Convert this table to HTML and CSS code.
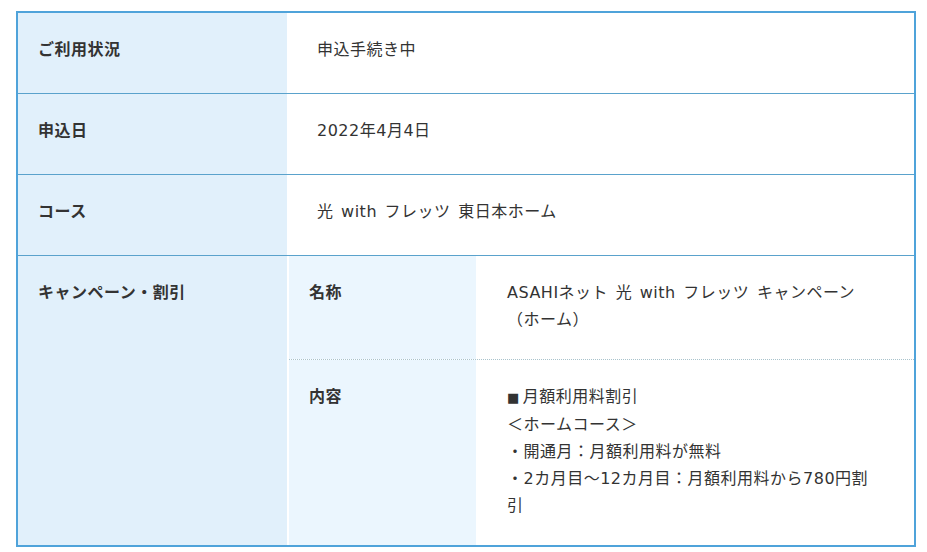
FILE: index.html
```html
<!DOCTYPE html>
<html lang="ja">
<head>
<meta charset="utf-8">
<title>ご利用状況</title>
<link rel="stylesheet" href="styles.css">
</head>
<body>
<div class="page">
  <div class="card">
    <div class="row">
      <div class="th">ご利用状況</div>
      <div class="td">申込手続き中</div>
    </div>
    <div class="row">
      <div class="th">申込日</div>
      <div class="td">2022年4月4日</div>
    </div>
    <div class="row">
      <div class="th">コース</div>
      <div class="td">光 with フレッツ 東日本ホーム</div>
    </div>
    <div class="row last">
      <div class="th">キャンペーン・割引</div>
      <div class="td nested">
        <div class="sub">
          <div class="sub-row">
            <div class="sub-th">名称</div>
            <div class="sub-td">ASAHIネット 光 with フレッツ キャンペーン<span class="nowrap">（ホーム）</span></div>
          </div>
          <div class="sub-row sub-last">
            <div class="sub-th">内容</div>
            <div class="sub-td"><span class="square">■</span>月額利用料割引<br>＜ホームコース＞<br>・開通月：月額利用料が無料<br>・2カ月目～12カ月目：月額利用料から780円割引</div>
          </div>
        </div>
      </div>
    </div>
  </div>
</div>
</body>
</html>
```
FILE: styles.css
```css
html, body {
  margin: 0;
  padding: 0;
  background: #ffffff;
}

body {
  font-family: "DejaVu Sans", "Noto Sans CJK JP", sans-serif;
  font-size: 16px;
  line-height: 27px;
  letter-spacing: 0.5px;
  word-spacing: 2px;
  color: #333333;
}

.page {
  padding: 11px 11px 0 16px;
}

.card {
  width: 900px;
  box-sizing: border-box;
  border: 2px solid #4fa3da;
}

.row {
  display: grid;
  grid-template-columns: 269px 1fr;
  min-height: 80px;
  border-bottom: 1px solid #5aa2cc;
}

.row.last {
  border-bottom: none;
}

.th {
  background: #e1f0fb;
  font-weight: bold;
  padding: 23px 20px 26px 20px;
}

.td {
  background: #ffffff;
  padding: 23px 30px 26px 30px;
}

.td.nested {
  padding: 0 0 0 2px;
}

.sub {
  display: flex;
  flex-direction: column;
  height: 100%;
}

.sub-row {
  display: grid;
  grid-template-columns: 187px 1fr;
  border-bottom: 1px dotted #a9c3cc;
}

.sub-row.sub-last {
  border-bottom: none;
  flex: 1;
}

.sub-th {
  background: #ebf6fe;
  font-weight: bold;
  padding: 23px 20px 26px 20px;
}

.sub-td {
  padding: 23px 40px 26px 31px;
}

.square {
  font-size: 13px;
  margin-right: 3px;
}

.nowrap {
  white-space: nowrap;
}
```
